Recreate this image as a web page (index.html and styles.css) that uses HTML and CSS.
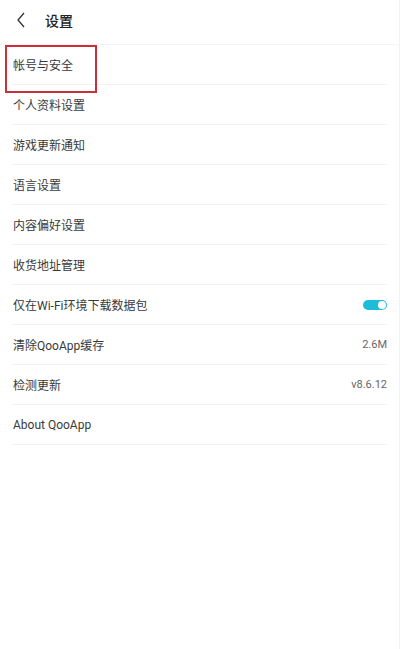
FILE: index.html
```html
<!DOCTYPE html>
<html lang="zh-CN">
<head>
    <meta charset="UTF-8">
    <meta name="viewport" content="width=device-width, initial-scale=1.0">
    <title>设置</title>
    <link rel="stylesheet" href="styles.css">
</head>
<body>

<div class="page">
    <div class="header">
        <svg class="back" width="10" height="16" viewBox="0 0 10 16">
            <path d="M8 1 L2 8 L8 15" fill="none" stroke="#333" stroke-width="1.3"/>
        </svg>
        <span class="title">设置</span>
    </div>

    <ul class="list">
        <li class="row">帐号与安全</li>
        <li class="row">个人资料设置</li>
        <li class="row">游戏更新通知</li>
        <li class="row">语言设置</li>
        <li class="row">内容偏好设置</li>
        <li class="row">收货地址管理</li>
        <li class="row">仅在Wi-Fi环境下载数据包<span class="switch"><span class="knob"></span></span></li>
        <li class="row">清除QooApp缓存<span class="value">2.6M</span></li>
        <li class="row">检测更新<span class="value">v8.6.12</span></li>
        <li class="row">About QooApp</li>
    </ul>

    <div class="highlight"></div>
</div>

</body>
</html>
```

FILE: styles.css
```css
body {
    margin: 0;
    background: #fff;
    font-family: Roboto, "Noto Sans CJK SC", sans-serif;
    color: #3a3a3a;
}
.page {
    position: relative;
    width: 400px;
    height: 649px;
    box-sizing: border-box;
    border-right: 1px solid #f2f2f2;
}
.header {
    height: 45px;
    display: flex;
    align-items: center;
    padding-left: 16px;
    box-sizing: border-box;
    border-bottom: 1px solid #f4f4f4;
}
.back {
    margin-right: 19px;
    margin-top: -4px;
}
.title {
    font-size: 14px;
    font-weight: 500;
    color: #222;
    margin-top: -5px;
}
.list {
    list-style: none;
    margin: 0;
    padding: 0 12px;
}
.row {
    height: 40px;
    display: flex;
    align-items: center;
    justify-content: space-between;
    padding-left: 1px;
    border-bottom: 1px solid #f2f2f2;
    font-size: 12px;
    box-sizing: border-box;
}
.value {
    font-size: 11px;
    color: #666;
}
.switch {
    width: 24px;
    height: 10px;
    border-radius: 5px;
    background: #1fbcd8;
    display: flex;
    align-items: center;
    justify-content: flex-end;
    padding: 0 1px;
    box-sizing: border-box;
}
.knob {
    width: 8px;
    height: 8px;
    border-radius: 50%;
    background: #fff;
}
.highlight {
    position: absolute;
    left: 5px;
    top: 45px;
    width: 92px;
    height: 48px;
    border: 2px solid #cc2f3a;
    box-sizing: border-box;
}
```
